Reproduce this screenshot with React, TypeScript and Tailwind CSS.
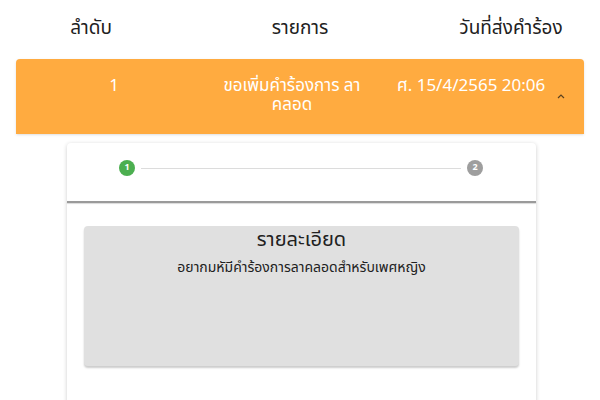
export default function App() {
  return (
    <div
      className="w-[600px] h-[400px] overflow-hidden bg-white"
      style={{ fontFamily: '"Noto Sans Thai", "Noto Sans", "DejaVu Sans", sans-serif' }}
    >
      {/* column headings */}
      <div className="grid grid-cols-[182px_236px_182px] h-[59px] items-center text-center text-[19px] text-[#212121]">
        <div>ลำดับ</div>
        <div>รายการ</div>
        <div className="pl-[4px] whitespace-nowrap">วันที่ส่งคำร้อง</div>
      </div>

      <div className="mx-4">
        {/* expanded row header */}
        <div className="grid grid-cols-[196px_160px_1fr_40px] h-[75px] pt-[18px] bg-[#ffab40] rounded-t text-white text-[17px] leading-[19px] shadow">
          <div className="text-center">1</div>
          <div className="text-center">ขอเพิ่มคำร้องการ ลา คลอด</div>
          <div className="pl-[25px] whitespace-nowrap">ศ. 15/4/2565 20:06</div>
          <div className="flex justify-center pt-[16px] pr-[8px]">
            <svg width="10" height="6" viewBox="0 0 10 6" fill="none" stroke="#5d4320" strokeWidth="1.2">
              <path d="M2 5 L5 2 L8 5" />
            </svg>
          </div>
        </div>

        {/* expanded content */}
        <div className="pl-[51px] pr-[48px] pt-[9px]">
          <div className="bg-white rounded shadow-[0_1px_4px_rgba(0,0,0,0.2)] h-[300px]">
            <div className="flex items-center h-[49px] pt-[1px] pl-[52px] pr-[53px]">
              <div className="w-4 h-4 rounded-full bg-[#4caf50] text-white text-[9px] font-bold flex items-center justify-center">1</div>
              <div className="flex-1 h-px bg-[#dcdcdc] mx-[6px]" />
              <div className="w-4 h-4 rounded-full bg-[#9e9e9e] text-white text-[9px] font-bold flex items-center justify-center">2</div>
            </div>
            <div className="h-[9px]" />
            <div className="h-[1.5px] bg-[#9a9a9a] shadow-[0_1px_1px_rgba(0,0,0,0.15)]" />
            <div className="px-[17px] pt-[23px]">
              <div className="bg-[#e0e0e0] h-[140px] rounded-sm shadow-[0_2px_2px_rgba(0,0,0,0.2)] text-center text-[#212121] pt-[1px]">
                <div className="text-[20px] leading-[26px]">รายละเอียด</div>
                <div className="text-[14px] mt-[4px]">อยากมหัมีคำร้องการลาคลอดสำหรับเพศหญิง</div>
              </div>
            </div>
          </div>
        </div>
      </div>
    </div>
  );
}
